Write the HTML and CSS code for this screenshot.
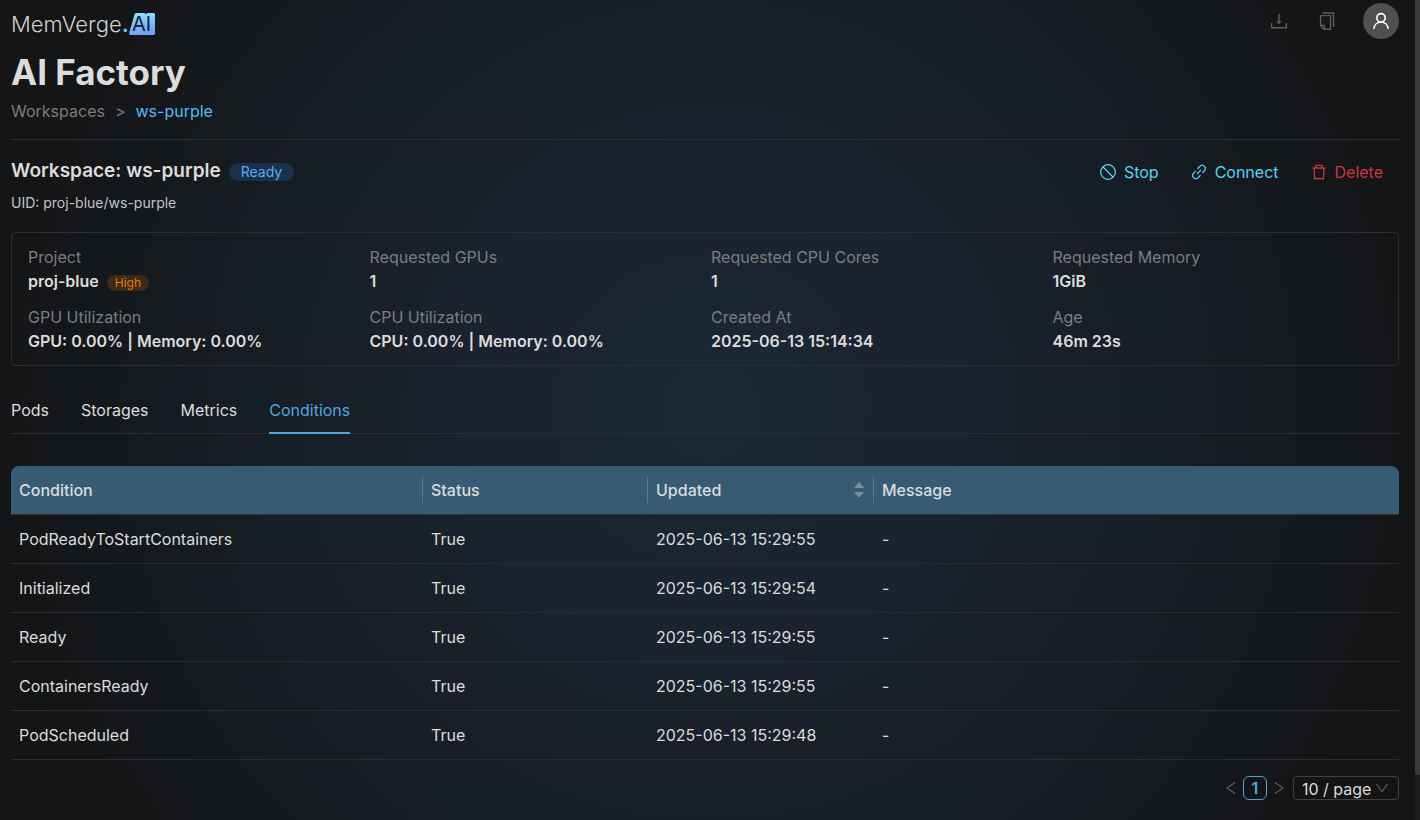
FILE: index.html
```html
<!DOCTYPE html>
<html lang="en">
<head>
<meta charset="utf-8">
<title>AI Factory</title>
<link rel="stylesheet" href="styles.css">
</head>
<body>
<div class="app">
  <div class="page">
    <header class="topbar">
      <a class="brand" href="#">
        <span class="brand-name">MemVerge<span class="brand-dot">.</span></span>
        <svg class="brand-ai" width="26" height="22" viewBox="0 0 26 22">
          <defs><linearGradient id="ai-fill" x1="0" y1="0" x2="0.2" y2="1"><stop offset="0" stop-color="#8beafb"/><stop offset="1" stop-color="#6f9ffb"/></linearGradient></defs>
          <path fill="url(#ai-fill)" d="M5.600 1.200Q6 0 7.200 0H15.500l1.500 1.300L18.500 0H24.500Q26 0 26 1.500V20.500Q26 22 24.500 22H1.800Q-.3 22 .2 19.800z"/>
          <text class="brand-ai-text" x="3" y="18">AI</text>
        </svg>
      </a>
      <div class="topbar-actions">
        <button class="icon-btn" type="button" aria-label="Downloads">
          <svg width="18" height="18" viewBox="0 0 18 18" fill="none" stroke="currentColor" stroke-width="1.400"><path d="M9 2v8.500M1.600 11v4.800h14.800V11"/><path d="M6.400 9h5.200L9 12.500z" fill="currentColor" stroke="none"/></svg>
        </button>
        <button class="icon-btn" type="button" aria-label="Documents">
          <svg width="18" height="18" viewBox="0 0 18 18" fill="none" stroke="currentColor" stroke-width="1.400"><path d="M2.600 3.600h9.900v13.600H6L2.600 13.800z"/><path d="M2.600 13.400H6.400v3.800"/><path d="M4.500 1h11v14"/></svg>
        </button>
        <button class="avatar" type="button" aria-label="Account">
          <svg width="18" height="18" viewBox="0 0 18 18" fill="none" stroke="currentColor" stroke-width="1.600"><circle cx="9" cy="5.800" r="4.200"/><path d="M1.800 17c.4-4 3.200-7 7.200-7s6.800 3 7.200 7"/></svg>
        </button>
      </div>
    </header>

    <h1 class="title">AI Factory</h1>
    <nav class="breadcrumb" aria-label="Breadcrumb">
      <a class="crumb" href="#">Workspaces</a>
      <span class="crumb">&gt;</span>
      <a class="crumb crumb-current" href="#">ws-purple</a>
    </nav>

    <section class="workspace">
      <div>
        <div class="workspace-heading">
          <h2 class="workspace-name">Workspace: ws-purple</h2>
          <span class="tag tag-ready">Ready</span>
        </div>
        <p class="uid">UID: proj-blue/ws-purple</p>
      </div>
      <div class="actions">
        <button class="action" type="button">
          <svg width="16" height="16" viewBox="0 0 16 16" fill="none" stroke="currentColor" stroke-width="1.300"><circle cx="8" cy="8" r="7.300"/><path d="M2.800 2.800l10.400 10.400"/></svg>
          Stop
        </button>
        <button class="action" type="button">
          <svg width="16" height="16" viewBox="0 0 16 16" fill="none" stroke="currentColor" stroke-width="1.300"><path d="M6.500 4.700L8.700 2.500a2.750 2.750 0 0 1 4.800 0a2.750 2.750 0 0 1 0 4.200L11.300 8.900M9.500 11.300l-2.200 2.200a2.750 2.750 0 0 1-4.800 0a2.750 2.750 0 0 1 0-4.200L4.700 7.100M5.900 10.100l4.200-4.200"/></svg>
          Connect
        </button>
        <button class="action action-danger" type="button">
          <svg width="16" height="16" viewBox="0 0 16 16" fill="none" stroke="currentColor" stroke-width="1.300"><path d="M1.500 4h13M5 4V1.300h6V4M3 4l.6 10.700h8.800L13 4"/></svg>
          Delete
        </button>
      </div>
    </section>

    <dl class="facts">
      <div class="fact"><dt>Project</dt><dd>proj-blue <span class="tag tag-high">High</span></dd></div>
      <div class="fact"><dt>Requested GPUs</dt><dd>1</dd></div>
      <div class="fact"><dt>Requested CPU Cores</dt><dd>1</dd></div>
      <div class="fact"><dt>Requested Memory</dt><dd>1GiB</dd></div>
      <div class="fact"><dt>GPU Utilization</dt><dd>GPU: 0.00% | Memory: 0.00%</dd></div>
      <div class="fact"><dt>CPU Utilization</dt><dd>CPU: 0.00% | Memory: 0.00%</dd></div>
      <div class="fact"><dt>Created At</dt><dd>2025-06-13 15:14:34</dd></div>
      <div class="fact"><dt>Age</dt><dd>46m 23s</dd></div>
    </dl>

    <div class="tabs" role="tablist">
      <button class="tab" role="tab" type="button">Pods</button>
      <button class="tab" role="tab" type="button">Storages</button>
      <button class="tab" role="tab" type="button">Metrics</button>
      <button class="tab tab-active" role="tab" type="button" aria-selected="true">Conditions</button>
    </div>

    <table class="table">
      <colgroup><col class="col-condition"><col class="col-status"><col class="col-updated"><col></colgroup>
      <thead>
        <tr>
          <th scope="col"><div class="head-cell">Condition</div></th>
          <th scope="col"><div class="head-cell">Status</div></th>
          <th scope="col"><div class="head-cell">Updated
            <svg class="sorter" width="10" height="16" viewBox="0 0 10 16" fill="currentColor"><path d="M5 0l5 6H0zM5 16L0 10h10z"/></svg></div></th>
          <th scope="col"><div class="head-cell">Message</div></th>
        </tr>
      </thead>
      <tbody>
        <tr><td>PodReadyToStartContainers</td><td>True</td><td>2025-06-13 15:29:55</td><td>-</td></tr>
        <tr><td>Initialized</td><td>True</td><td>2025-06-13 15:29:54</td><td>-</td></tr>
        <tr><td>Ready</td><td>True</td><td>2025-06-13 15:29:55</td><td>-</td></tr>
        <tr><td>ContainersReady</td><td>True</td><td>2025-06-13 15:29:55</td><td>-</td></tr>
        <tr><td>PodScheduled</td><td>True</td><td>2025-06-13 15:29:48</td><td>-</td></tr>
      </tbody>
    </table>

    <nav class="pagination" aria-label="Pagination">
      <button class="page-arrow" type="button" aria-label="Previous page"><svg width="10" height="12" viewBox="0 0 10 12" fill="none" stroke="currentColor" stroke-width="1.200"><path d="M9 .5L1 6l8 5.500"/></svg></button>
      <button class="page-number" type="button" aria-current="page">1</button>
      <button class="page-arrow" type="button" aria-label="Next page"><svg width="10" height="12" viewBox="0 0 10 12" fill="none" stroke="currentColor" stroke-width="1.200"><path d="M1 .5L9 6l-8 5.500"/></svg></button>
      <div class="page-size">
        <select aria-label="Rows per page"><option>10 / page</option><option>20 / page</option></select>
        <svg class="page-size-caret" width="12" height="10" viewBox="0 0 12 10" fill="none" stroke="currentColor" stroke-width="1.200"><path d="M.5 1L6 8.500 11.500 1"/></svg>
      </div>
    </nav>
  </div>
  <div class="rail"><div class="rail-thumb"></div></div>
</div>
</body>
</html>
```
FILE: styles.css
```css
* { box-sizing: border-box; }

body {
  margin: 0;
  background: #141414;
  color: #dcdcdc;
  font-family: Inter, "Liberation Sans", sans-serif;
  font-size: 16px;
  line-height: 24px;
}

button, select {
  margin: 0;
  padding: 0;
  border: 0;
  background: none;
  color: inherit;
  font: inherit;
}

a { color: inherit; text-decoration: none; }
svg { display: block; flex: none; }

.app {
  display: flex;
  min-height: 100vh;
  background: radial-gradient(circle at 50% 50%, #1b2836 0%, #19202a 42%, #151b20 66%, #141517 86%, #141414 100%);
}

.page { flex: 1; padding: 0 16px 20px 11px; }

.rail { width: 5px; background: #1c1c1e; }
.rail-thumb { height: 775px; background: #3a3a3c; border-radius: 0 0 0 4px; }

.topbar {
  display: flex;
  justify-content: space-between;
  align-items: center;
  height: 42px;
}

.brand { display: flex; align-items: center; padding-top: 6px; }
.brand-name { font-size: 22px; font-weight: 300; color: #cfcfcf; }
.brand-dot { color: #5ad1f5; font-weight: 600; }
.brand-ai { overflow: visible; }
.brand-ai-text { font-size: 20px; fill: #17202b; }

.topbar-actions { display: flex; align-items: center; gap: 24px; }
.icon-btn { display: grid; place-items: center; width: 24px; height: 24px; color: #5c5e5f; }
.avatar {
  display: grid;
  place-items: center;
  width: 36px;
  height: 36px;
  border-radius: 50%;
  background: #505052;
  color: #fff;
}

.title {
  margin: 8px 0 0;
  font-size: 35px;
  font-weight: 700;
  line-height: 44px;
}

.breadcrumb {
  display: flex;
  gap: 10px;
  padding: 5px 0 16px;
  border-bottom: 1px solid #2a2e31;
}
.crumb { color: #7b7d7f; }
.crumb-current { color: #58b9f0; }

.workspace {
  display: flex;
  justify-content: space-between;
  align-items: flex-start;
  padding: 16px 16px 19px 0;
}
.workspace-heading { display: flex; align-items: center; gap: 8px; }
.workspace-name { margin: 0; font-size: 19px; font-weight: 600; line-height: 29px; }
.uid { margin: 7px 0 0; font-size: 14px; line-height: 21px; color: #c2c4c5; }

.tag { margin-top: 3px; border-radius: 9px; font-weight: 400; }
.tag-ready {
  padding: 0 12px;
  background: #1b304a;
  color: #5fa9ee;
  font-size: 14px;
  line-height: 18px;
}
.tag-high {
  padding: 0 8px;
  background: #3d2a1a;
  color: #e87a08;
  font-size: 12px;
  line-height: 16px;
}

.actions { display: flex; gap: 32px; padding-top: 4px; }
.action { display: flex; align-items: center; gap: 8px; color: #5ad1f5; }
.action-danger { color: #c9383a; }

.facts {
  display: grid;
  grid-template-columns: repeat(4, 1fr);
  row-gap: 12px;
  margin: 0;
  padding: 12px 4px 12px 16px;
  border: 1px solid #2a2e31;
  border-radius: 4px;
}
.fact dt { color: #7b7d7f; }
.fact dd {
  display: flex;
  align-items: center;
  gap: 8px;
  margin: 0;
  font-weight: 600;
}

.tabs {
  display: flex;
  gap: 32px;
  margin: 20px 0 32px;
  border-bottom: 1px solid #2a2c2e;
}
.tab { padding: 12px 0 10px; margin-bottom: -1px; border-bottom: 2px solid transparent; }
.tab-active { border-color: #4aa8dc; color: #4aa8dc; }

.table {
  width: 100%;
  border-collapse: separate;
  border-spacing: 0;
  table-layout: fixed;
}
.col-condition { width: 412px; }
.col-status { width: 225px; }
.col-updated { width: 226px; }
.table th {
  padding: 0;
  border-bottom: 1px solid #2c3338;
  background: #375b72;
  font-weight: 500;
  text-align: left;
}
.table th:first-child { border-top-left-radius: 8px; }
.table th:last-child { border-top-right-radius: 8px; }
.head-cell {
  display: flex;
  justify-content: space-between;
  align-items: center;
  height: 26px;
  margin: 11px 0;
  padding: 0 9px 0 8px;
  border-right: 1px solid #5b7a8d;
}
.table th:last-child .head-cell { border-right: 0; }
.sorter { color: #7a909e; }
.table td { padding: 12px 8px; border-bottom: 1px solid #2a2d30; }

.pagination {
  display: flex;
  justify-content: flex-end;
  align-items: center;
  margin-top: 16px;
}
.page-arrow { display: grid; place-items: center; width: 24px; height: 24px; color: #5a5c5e; }
.page-number {
  width: 24px;
  height: 24px;
  border: 1px solid #4aa8dc;
  border-radius: 6px;
  background: #141414;
  color: #4aa8dc;
  font-weight: 600;
  line-height: 22px;
}
.page-size { position: relative; margin-left: 2px; }
.page-size select {
  display: block;
  appearance: none;
  width: 106px;
  height: 24px;
  padding-left: 8px;
  border: 1px solid #424242;
  border-radius: 4px;
  background: #141414;
}
.page-size-caret { position: absolute; top: 7px; right: 11px; color: #5a5c5e; pointer-events: none; }
```
